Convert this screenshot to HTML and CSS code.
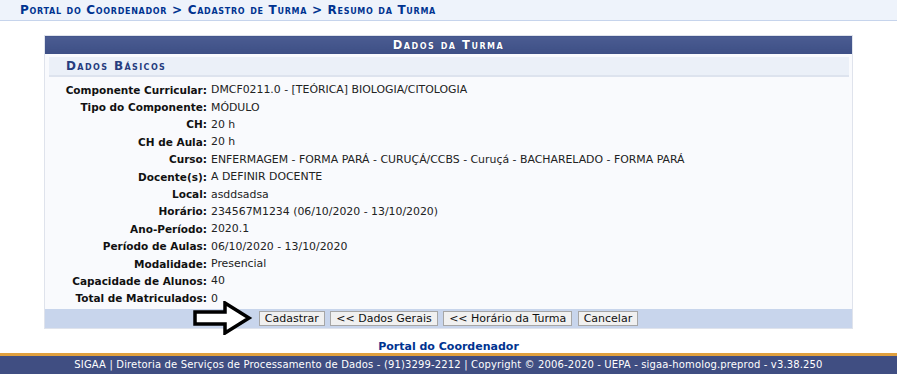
FILE: index.html
```html
<!DOCTYPE html>
<html lang="pt-BR">
<head>
  <meta charset="UTF-8">
  <title>Resumo da Turma</title>
  <link rel="stylesheet" href="styles.css">
</head>
<body>

<div class="breadcrumb">Portal do Coordenador &gt; Cadastro de Turma &gt; Resumo da Turma</div>

<table class="formulario">
  <thead>
    <tr><th colspan="2" class="caption">Dados da Turma</th></tr>
  </thead>
  <tbody>
    <tr><td colspan="2" class="subtitle"><div>Dados Básicos</div></td></tr>
    <tr><th>Componente Curricular:</th><td>DMCF0211.0 - [TEÓRICA] BIOLOGIA/CITOLOGIA</td></tr>
    <tr><th>Tipo do Componente:</th><td>MÓDULO</td></tr>
    <tr><th>CH:</th><td>20 h</td></tr>
    <tr><th>CH de Aula:</th><td>20 h</td></tr>
    <tr><th>Curso:</th><td>ENFERMAGEM - FORMA PARÁ - CURUÇÁ/CCBS - Curuçá - BACHARELADO - FORMA PARÁ</td></tr>
    <tr><th>Docente(s):</th><td>A DEFINIR DOCENTE</td></tr>
    <tr><th>Local:</th><td>asddsadsa</td></tr>
    <tr><th>Horário:</th><td>234567M1234 (06/10/2020 - 13/10/2020)</td></tr>
    <tr><th>Ano-Período:</th><td>2020.1</td></tr>
    <tr><th>Período de Aulas:</th><td>06/10/2020 - 13/10/2020</td></tr>
    <tr><th>Modalidade:</th><td>Presencial</td></tr>
    <tr><th>Capacidade de Alunos:</th><td>40</td></tr>
    <tr><th>Total de Matriculados:</th><td>0</td></tr>
  </tbody>
  <tfoot>
    <tr>
      <td colspan="2" class="actions">
        <svg class="pointer" width="60" height="34" viewBox="0 0 60 34">
          <path d="M2 11 H32 V2 L56 17 L32 32 V23 H2 Z" fill="#fff" stroke="#000" stroke-width="3.5" stroke-linejoin="miter"/>
        </svg>
        <button>Cadastrar</button>
        <button>&lt;&lt; Dados Gerais</button>
        <button>&lt;&lt; Horário da Turma</button>
        <button>Cancelar</button>
      </td>
    </tr>
  </tfoot>
</table>

<div class="portal-link"><a href="#">Portal do Coordenador</a></div>

<div class="rodape">SIGAA | Diretoria de Serviços de Processamento de Dados - (91)3299-2212 | Copyright © 2006-2020 - UEPA - sigaa-homolog.preprod - v3.38.250</div>

</body>
</html>
```

FILE: styles.css
```css
body {
  margin: 0;
  width: 897px;
  font-family: "DejaVu Sans", Verdana, sans-serif;
  font-size: 10.9px;
  color: #222;
  background: #fff;
}

.breadcrumb {
  height: 20px;
  line-height: 21px;
  padding-left: 20px;
  background: #eef3fb;
  border-bottom: 1px solid #c6d4ec;
  color: #003390;
  font-weight: bold;
  font-size: 12px;
  font-variant: small-caps;
  letter-spacing: 0.7px;
}

.formulario {
  width: 809px;
  margin: 14px 0 0 44px;
  border-collapse: collapse;
  background: #f9fafd;
  border: 1px solid #dfe3ec;
}

.formulario .caption {
  height: 18px;
  padding: 0;
  background: linear-gradient(#4b5c92, #3d4f85);
  color: #fff;
  font-size: 11.5px;
  font-variant: small-caps;
  letter-spacing: 1.5px;
  text-align: center;
  text-shadow: 0 0 1px #23306a;
}

.formulario .subtitle {
  padding: 3px 3px 0 4px;
}

.formulario .subtitle div {
  height: 18px;
  line-height: 18px;
  padding-left: 17px;
  background: #ebf0f8;
  border-bottom: 2px solid #dde3ee;
  color: #263c7e;
  font-weight: bold;
  font-size: 12px;
  font-variant: small-caps;
  letter-spacing: 1.4px;
}

.formulario tbody th {
  width: 162px;
  padding: 0 2px 0 0;
  height: 17.4px;
  text-align: right;
  font-weight: bold;
  font-size: 10.5px;
  white-space: nowrap;
  color: #111;
}

.formulario tbody td {
  padding: 0 0 0 2px;
  white-space: nowrap;
}

.formulario tbody tr:nth-child(2) th,
.formulario tbody tr:nth-child(2) td {
  padding-top: 4px;
}

.formulario tbody tr:last-child th,
.formulario tbody tr:last-child td {
  padding-bottom: 2px;
}

.actions {
  position: relative;
  height: 19px;
  padding: 0;
  background: #c8d5ec;
  text-align: center;
}

.actions button {
  height: 15px;
  padding: 0 5px;
  margin: 0 1px;
  background: #f0f0f0;
  border: 1px solid #a6a6a6;
  font-family: "DejaVu Sans", Verdana, sans-serif;
  font-size: 11px;
  color: #111;
  vertical-align: middle;
}

.pointer {
  position: absolute;
  left: 148px;
  top: -8px;
}

.portal-link {
  margin-top: 11px;
  text-align: center;
  font-size: 11px;
  font-weight: bold;
}

.portal-link a {
  color: #003390;
  text-decoration: none;
}

.rodape {
  height: 18px;
  line-height: 18px;
  background: #404e82;
  border-top: 3px solid #e0a03e;
  color: #fff;
  text-align: center;
  font-size: 10px;
  letter-spacing: 0.15px;
}
```
